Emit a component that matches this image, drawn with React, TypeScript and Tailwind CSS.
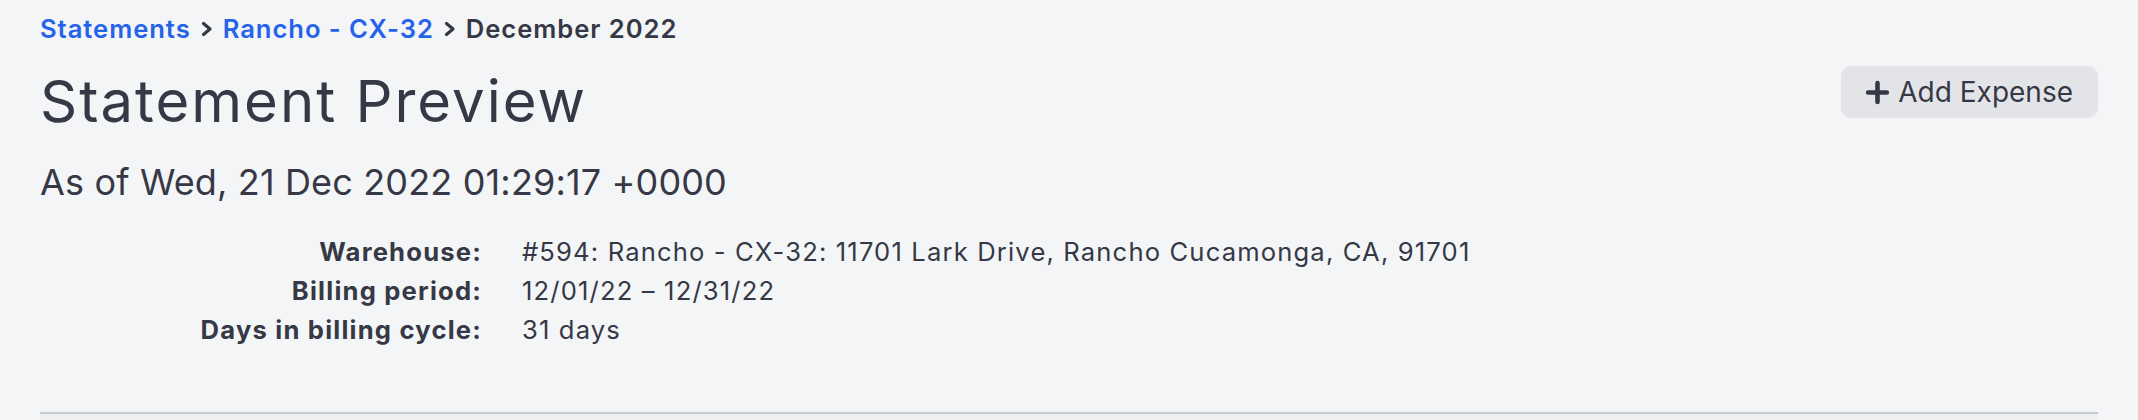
import React from "react";

function Chevron() {
  return (
    <svg width="12" height="16" viewBox="0 0 12 16" fill="none" aria-hidden="true">
      <polyline
        points="2.5,2.5 9,8 2.5,13.5"
        stroke="#363846"
        strokeWidth="3.2"
        strokeLinecap="round"
        strokeLinejoin="round"
      />
    </svg>
  );
}

function PlusIcon() {
  return (
    <svg width="25" height="25" viewBox="0 0 24 24" fill="none" aria-hidden="true">
      <path d="M12 3v18M3 12h18" stroke="#363846" strokeWidth="4.4" strokeLinecap="round" />
    </svg>
  );
}

const details: { label: string; value: string }[] = [
  { label: "Warehouse:", value: "#594: Rancho - CX-32: 11701 Lark Drive, Rancho Cucamonga, CA, 91701" },
  { label: "Billing period:", value: "12/01/22 \u2013 12/31/22" },
  { label: "Days in billing cycle:", value: "31 days" },
];

export default function App() {
  return (
    <div className="min-h-screen bg-[#f4f5f7] font-['Inter','Noto_Sans',sans-serif] text-[#363846]">
      <div className="px-[40px] pt-[10px]">
        {/* breadcrumb */}
        <nav className="flex items-center gap-[10px] text-[25.6px] leading-[38px] font-semibold tracking-[0.95px]">
          <a href="#" className="text-[#2563eb]">Statements</a>
          <Chevron />
          <a href="#" className="text-[#2563eb]">Rancho - CX-32</a>
          <Chevron />
          <span>December 2022</span>
        </nav>

        {/* heading row */}
        <div className="mt-[18px] flex items-start justify-between">
          <h1 className="mt-[3px] text-[58px] leading-[64px] font-normal tracking-[2px]">Statement Preview</h1>
          <button className="flex h-[52px] items-center gap-[8px] rounded-[10px] bg-[#e3e4e8] pl-[24px] pr-[25px] text-[28px] leading-none">
            <PlusIcon />
            <span>Add Expense</span>
          </button>
        </div>

        <p className="mt-[27px] text-[36px] leading-[44px] tracking-[0.15px]">As of Wed, 21 Dec 2022 01:29:17 +0000</p>

        {/* statement details */}
        <dl className="mt-[28px] text-[25.6px] leading-[39px]">
          {details.map((d) => (
            <div key={d.label} className="flex gap-[40px]">
              <dt className="w-[442px] text-right font-bold tracking-[1.2px]">{d.label}</dt>
              <dd className="tracking-[1.15px]">{d.value}</dd>
            </div>
          ))}
        </dl>

        <div className="mt-[63px] border-t-2 border-[#c6cad2] bg-[#efefef] h-[20px]" />
      </div>
    </div>
  );
}
